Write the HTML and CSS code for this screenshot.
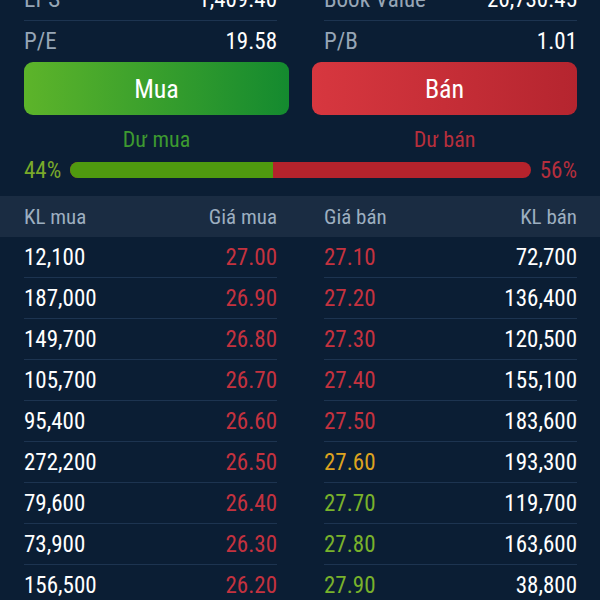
FILE: index.html
```html
<!DOCTYPE html>
<html lang="vi">
<head>
    <meta charset="UTF-8">
    <meta name="viewport" content="width=device-width, initial-scale=1.0">
    <title>Đặt lệnh</title>
    <link rel="stylesheet" href="styles.css">
</head>
<body>
<div class="page">
    <!-- Chỉ số cơ bản -->
    <div class="stats">
        <div class="stat-row"><span class="label">EPS</span><span class="value">1,409.40</span></div>
        <div class="stat-row"><span class="label">Book Value</span><span class="value">26,730.45</span></div>
        <div class="stat-row last"><span class="label">P/E</span><span class="value">19.58</span></div>
        <div class="stat-row last"><span class="label">P/B</span><span class="value">1.01</span></div>
    </div>

    <div class="actions">
        <button class="btn btn-buy">Mua</button>
        <button class="btn btn-sell">Bán</button>
    </div>

    <!-- Dư mua / dư bán -->
    <div class="balance-labels">
        <span class="buy-text">Dư mua</span>
        <span class="sell-text">Dư bán</span>
    </div>
    <div class="balance">
        <span class="pct pct-buy">44%</span>
        <div class="bar">
            <div class="bar-buy" style="width: 44%"></div>
        </div>
        <span class="pct pct-sell">56%</span>
    </div>
</div>

<div class="book-head">
    <div class="half"><span>KL mua</span><span>Giá mua</span></div>
    <div class="half"><span>Giá bán</span><span>KL bán</span></div>
</div>

<div class="book">
    <div class="half"><span>12,100</span><span class="red">27.00</span></div>
    <div class="half"><span class="red">27.10</span><span>72,700</span></div>

    <div class="half"><span>187,000</span><span class="red">26.90</span></div>
    <div class="half"><span class="red">27.20</span><span>136,400</span></div>

    <div class="half"><span>149,700</span><span class="red">26.80</span></div>
    <div class="half"><span class="red">27.30</span><span>120,500</span></div>

    <div class="half"><span>105,700</span><span class="red">26.70</span></div>
    <div class="half"><span class="red">27.40</span><span>155,100</span></div>

    <div class="half"><span>95,400</span><span class="red">26.60</span></div>
    <div class="half"><span class="red">27.50</span><span>183,600</span></div>

    <div class="half"><span>272,200</span><span class="red">26.50</span></div>
    <div class="half"><span class="yellow">27.60</span><span>193,300</span></div>

    <div class="half"><span>79,600</span><span class="red">26.40</span></div>
    <div class="half"><span class="green">27.70</span><span>119,700</span></div>

    <div class="half"><span>73,900</span><span class="red">26.30</span></div>
    <div class="half"><span class="green">27.80</span><span>163,600</span></div>

    <div class="half"><span>156,500</span><span class="red">26.20</span></div>
    <div class="half"><span class="green">27.90</span><span>38,800</span></div>
</div>
</body>
</html>
```

FILE: styles.css
```css
body {
    margin: 0;
    background-color: #0b1e34;
    color: #fff;
    font-family: "Roboto Condensed", "Liberation Sans Narrow", Roboto, sans-serif;
    font-size: 23px;
    overflow: hidden;
}

.page {
    padding: 0 23px 0 24px;
    margin-top: -21px; /* list is scrolled a bit */
}

/* Stats */
.stats {
    display: grid;
    grid-template-columns: 1fr 1fr;
    column-gap: 47px;
}

.stat-row {
    display: flex;
    justify-content: space-between;
    align-items: center;
    height: 41px;
    border-bottom: 1px solid #1d3450;
}

.stat-row.last {
    border-bottom: none;
}

.label {
    color: #97a6b6;
}

/* Buttons */
.actions {
    display: grid;
    grid-template-columns: 1fr 1fr;
    column-gap: 23px;
}

.btn {
    height: 53px;
    border: none;
    border-radius: 9px;
    color: #fff;
    font-family: inherit;
    font-size: 26px;
}

.btn-buy {
    background: linear-gradient(90deg, #5db42a, #148a2f);
}

.btn-sell {
    background: linear-gradient(90deg, #d7373f, #b5252f);
}

/* Balance */
.balance-labels {
    display: grid;
    grid-template-columns: 1fr 1fr;
    column-gap: 23px;
    text-align: center;
    font-size: 22px;
    margin-top: 12px;
    height: 26px;
    line-height: 26px;
}

.buy-text {
    color: #3d9a30;
}

.sell-text {
    color: #b72f3c;
}

.balance {
    display: flex;
    align-items: center;
    height: 34px;
}

.pct-buy {
    color: #79a92a;
}

.pct-sell {
    color: #b52e3d;
}

.bar {
    flex: 1;
    height: 16px;
    margin: 0 9px;
    border-radius: 8px;
    background-color: #b5232c;
    overflow: hidden;
}

.bar-buy {
    height: 100%;
    background-color: #4f9a0f;
}

/* Order book */
.book-head {
    display: grid;
    grid-template-columns: 1fr 1fr;
    column-gap: 47px;
    padding: 0 23px 0 24px;
    margin-top: 9px;
    background-color: #1a2c42;
    color: #9dafc0;
    font-size: 21px;
}

.book-head .half {
    display: flex;
    justify-content: space-between;
    align-items: center;
    height: 41px;
}

.book {
    display: grid;
    grid-template-columns: 1fr 1fr;
    column-gap: 47px;
    padding: 0 23px 0 24px;
}

.book .half {
    display: flex;
    justify-content: space-between;
    align-items: center;
    height: 40px;
    border-bottom: 1px solid #1d3450;
}

.red {
    color: #c4323f;
}

.yellow {
    color: #dda320;
}

.green {
    color: #79b22b;
}
```
